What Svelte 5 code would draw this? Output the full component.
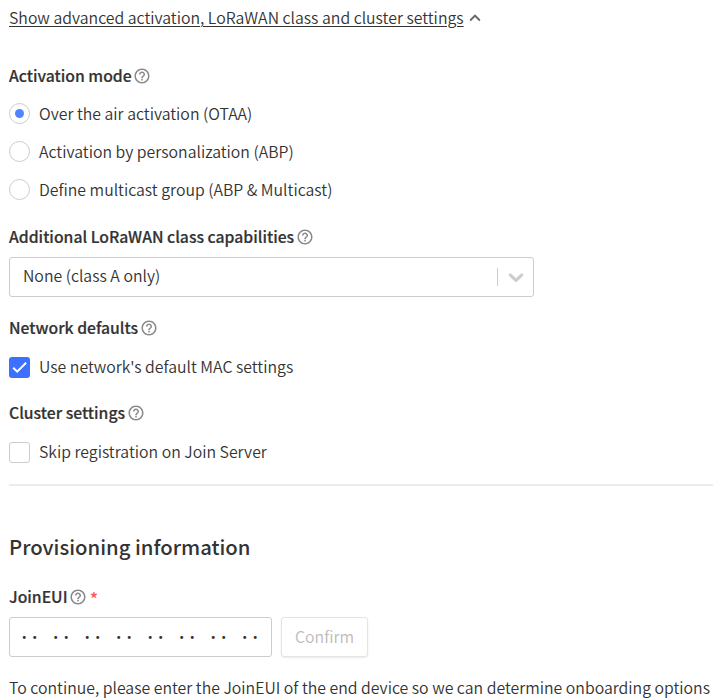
<script>
  let mode = $state('otaa');
  const modes = [
    { id: 'otaa', label: 'Over the air activation (OTAA)' },
    { id: 'abp', label: 'Activation by personalization (ABP)' },
    { id: 'multicast', label: 'Define multicast group (ABP & Multicast)' }
  ];
  const bytes = Array(8).fill(0);
</script>

{#snippet help()}
  <svg class="help" viewBox="0 0 24 24" aria-hidden="true">
    <path fill="currentColor" d="M11 18h2v-2h-2v2zm1-16C6.48 2 2 6.48 2 12s4.48 10 10 10 10-4.48 10-10S17.52 2 12 2zm0 18c-4.41 0-8-3.59-8-8s3.59-8 8-8 8 3.59 8 8-3.59 8-8 8zm0-14c-2.21 0-4 1.79-4 4h2c0-1.1.9-2 2-2s2 .9 2 2c0 2-3 1.75-3 5h2c0-2.25 3-2.5 3-5 0-2.21-1.79-4-4-4z" />
  </svg>
{/snippet}

<main>
  <div class="toggle">
    <span class="link">Show advanced activation, LoRaWAN class and cluster settings</span>
    <svg class="chev" viewBox="0 0 24 24"><path fill="currentColor" d="M12 8l-6 6 1.41 1.41L12 10.83l4.59 4.58L18 14z" /></svg>
  </div>

  <div class="label first"><span>Activation mode</span>{@render help()}</div>
  <div class="radios">
    {#each modes as m}
      <div class="option" role="radio" tabindex="-1" aria-checked={mode === m.id} onclick={() => (mode = m.id)} onkeydown={() => (mode = m.id)}>
        <i class="radio" class:on={mode === m.id}></i><span>{m.label}</span>
      </div>
    {/each}
  </div>

  <div class="label class-label"><span>Additional LoRaWAN class capabilities</span>{@render help()}</div>
  <div class="select">
    <span>None (class A only)</span>
    <div class="arrow">
      <svg viewBox="0 0 20 20" width="24" height="24"><path fill="#ccc" stroke="#ccc" stroke-width="0.4" d="M4.516 7.548c0.436-0.446 1.043-0.481 1.576 0l3.908 3.747 3.908-3.747c0.533-0.481 1.141-0.446 1.574 0 0.436 0.445 0.408 1.197 0 1.615-0.406 0.418-4.695 4.502-4.695 4.502-0.217 0.223-0.502 0.335-0.787 0.335s-0.57-0.112-0.789-0.335c0 0-4.287-4.084-4.695-4.502s-0.436-1.17 0-1.615z" /></svg>
    </div>
  </div>

  <div class="label net-label"><span>Network defaults</span>{@render help()}</div>
  <div class="check-row">
    <i class="box on"><svg viewBox="0 0 21 21"><path d="M4.2 10.7l4 4 8.9-8.9" fill="none" stroke="#fff" stroke-width="2" /></svg></i>
    <span>Use network's default MAC settings</span>
  </div>

  <div class="label cluster-label"><span>Cluster settings</span>{@render help()}</div>
  <div class="check-row"><i class="box"></i><span>Skip registration on Join Server</span></div>

  <hr />
  <h3><span>Provisioning information</span></h3>

  <div class="label join-label"><span>JoinEUI</span>{@render help()}<b class="req">*</b></div>
  <div class="join-row">
    <div class="eui">{#each bytes as _}<span class="byte"><i>•</i><i>•</i></span>{/each}</div>
    <button disabled><span>Confirm</span></button>
  </div>
  <p><span>To continue, please enter the JoinEUI of the end device so we can determine onboarding options</span></p>
</main>

<style>
  :global(body) { background: #fff; overflow: hidden; }
  main {
    box-sizing: border-box;
    width: 713px;
    height: 700px;
    overflow: hidden;
    padding-left: 9px;
    display: flex;
    flex-direction: column;
    font-family: "Noto Sans CJK SC", "Noto Sans", sans-serif;
    font-size: 15.84px;
    line-height: 24px;
    font-weight: 350;
    color: #333;
    white-space: nowrap;
  }
  main > * { flex-shrink: 0; }
  i { font-style: normal; }
  .toggle { display: flex; align-items: center; height: 36px; }
  .link { text-decoration: underline; text-decoration-thickness: 1px; text-underline-offset: 2px; }
  .chev { width: 22px; height: 22px; margin-left: 0.5px; color: #666; }
  .label { display: flex; align-items: center; height: 24px; font-size: 15.74px; font-weight: 500; -webkit-text-stroke: 0.2px #333; }
  .check-row span, .select > span { padding-bottom: 2px; }
  .first { margin-top: 28px; }
  .toggle .link { line-height: 24px; margin-bottom: 0.5px; }
  .help { width: 18px; height: 18px; margin-left: 1.7px; color: #888; }
  .label > span { line-height: 24px; margin-bottom: 0.5px; }
  .radios { margin-top: 7px; }
  .option { display: flex; align-items: center; height: 38px; gap: 9px; }
  .option span, button span { margin-bottom: 0.5px; }
  .radio { box-sizing: border-box; display: grid; place-items: center; width: 21px; height: 21px; margin-bottom: 1px; border: 1px solid #ccc; border-radius: 50%; }
  .radio.on::after { content: ""; width: 9px; height: 9px; border-radius: 50%; background: #5185ff; }
  .class-label { margin-top: 16px; }
  .select { box-sizing: border-box; display: flex; align-items: center; justify-content: space-between; width: 525px; height: 40px; margin-top: 8px; padding-left: 13px; border: 1px solid #ccc; border-radius: 3px; }
  .arrow { display: flex; align-items: center; justify-content: center; width: 35px; height: 18px; border-left: 1px solid #ccc; }
  .net-label { margin-top: 19px; }
  .check-row { display: flex; align-items: center; gap: 9px; height: 25px; margin-top: 15px; }
  .box { box-sizing: border-box; display: block; width: 21px; height: 21px; border: 1px solid #ccc; border-radius: 3px; }
  .box.on { border: 0; background: #3d70ff; }
  .box svg { display: block; width: 21px; height: 21px; }
  .cluster-label { margin-top: 21px; }
  hr { width: 100%; height: 2px; margin: 19px 0 0; border: 0; background: #ececec; }
  h3 { margin: 45px 0 0; height: 30px; line-height: 30px; font-size: 20.3px; font-weight: 500; }
  .join-label { margin-top: 24px; }
  .req { margin-left: 2.5px; padding-top: 2px; font-size: 18px; color: #f55; font-weight: 400; -webkit-text-stroke: 0.2px #f55; }
  .join-row { display: flex; gap: 9px; margin-top: 8px; }
  .eui { box-sizing: border-box; display: flex; align-items: center; gap: 10.5px; width: 263px; height: 40px; padding: 1px 0 0 9px; border: 1px solid #ccc; border-radius: 3px; }
  .byte { display: flex; }
  .byte i { width: 10.5px; text-align: center; font-family: "DejaVu Sans", sans-serif; font-size: 10px; font-weight: 400; }
  button { box-sizing: border-box; display: flex; align-items: center; justify-content: center; width: 87px; height: 40px; padding: 0; border: 1px solid #e4e4e4; border-radius: 3px; background: #fff; box-shadow: 0 1px 2px rgba(0, 0, 0, .08); font: inherit; color: #bbb; }
  p { margin: 19px 0 0; }
</style>
